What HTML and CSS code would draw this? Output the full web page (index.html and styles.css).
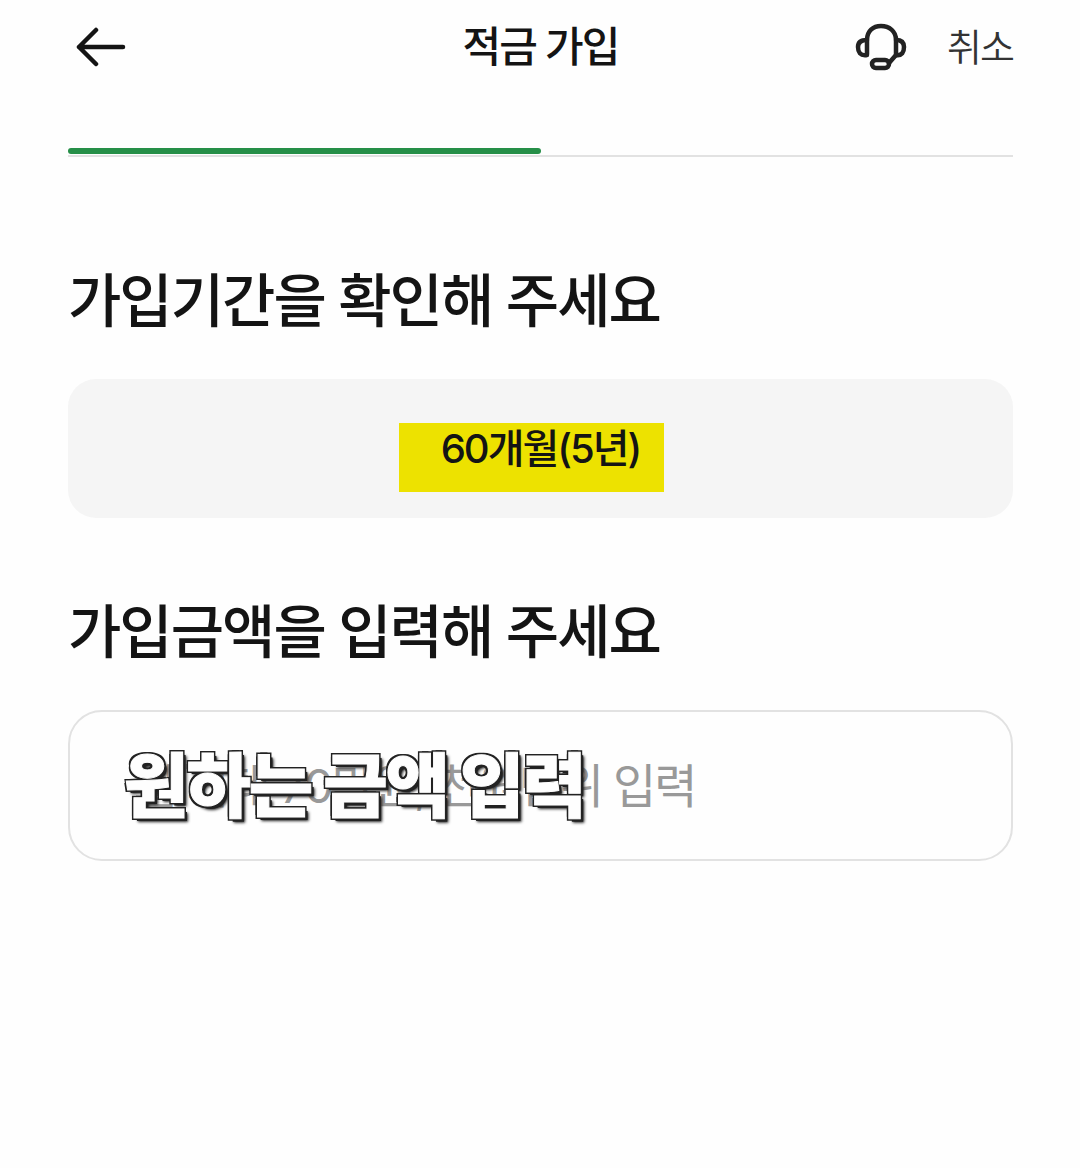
FILE: index.html
```html
<!DOCTYPE html>
<html lang="ko">
<head>
    <meta charset="UTF-8">
    <meta name="viewport" content="width=device-width, initial-scale=1.0">
    <title>적금 가입</title>
    <link rel="stylesheet" href="styles.css">
</head>
<body>
    <!-- Header -->
    <header class="topbar">
        <button class="icon-btn back" type="button" aria-label="뒤로">
            <svg width="52" height="42" viewBox="0 0 52 42" fill="none" stroke="#141414" stroke-width="4.5" stroke-linecap="round" stroke-linejoin="round">
                <path d="M20 4 L3 21 L20 38 M3 21 H47"/>
            </svg>
        </button>
        <h1 class="title">적금 가입</h1>
        <div class="actions">
            <button class="icon-btn" type="button" aria-label="상담">
                <svg width="52" height="50" viewBox="0 0 52 50" fill="none" stroke="#222" stroke-width="4.5" stroke-linecap="round" stroke-linejoin="round">
                    <path d="M12 32 V18 C12 9 18 4 26 4 C34 4 41 9 41 18 V33 L34 41"/>
                    <path d="M12 18 C5 18 3 21 3 25 C3 30 5 34 12 33"/>
                    <path d="M41 18 C47 18 49 21 49 25 C49 30 47 34 41 33"/>
                    <rect x="17" y="38" width="17" height="8" rx="4"/>
                </svg>
            </button>
            <button class="cancel" type="button">취소</button>
        </div>
    </header>

    <!-- Progress -->
    <div class="progress"><div class="progress-bar"></div></div>

    <main class="content">
        <section>
            <h2>가입기간을 확인해 주세요</h2>
            <div class="period"><mark>60개월(5년)</mark></div>
        </section>

        <section>
            <h2><label for="amount">가입금액을 입력해 주세요</label></h2>
            <div class="amount-box">
                <input type="text" id="amount" inputmode="numeric" placeholder="월 최대 70만원, 천원단위 입력">
                <span class="caption">원하는 금액 입력</span>
            </div>
        </section>
    </main>
</body>
</html>
```

FILE: styles.css
```css
* {
    box-sizing: border-box;
}

body {
    margin: 0;
    padding: 0 67px 0 68px;
    background: #fefefe;
    color: #141414;
    font-family: Inter, "Noto Sans CJK KR", sans-serif;
    letter-spacing: -2px;
}

button {
    padding: 0;
    border: none;
    background: none;
    color: inherit;
    font: inherit;
    letter-spacing: inherit;
    cursor: pointer;
}

/* Header */
.topbar {
    display: grid;
    grid-template-columns: 1fr auto 1fr;
    align-items: center;
    height: 94px;
}

.icon-btn {
    display: flex;
}

.back {
    padding-left: 8px;
}

.title {
    margin: 0;
    font-size: 42px;
    font-weight: 500;
    line-height: 60px;
}

.actions {
    display: flex;
    justify-content: flex-end;
    align-items: center;
    gap: 40px;
}

.cancel {
    color: #333;
    font-size: 38px;
    font-weight: 350;
    line-height: 60px;
}

/* Progress */
.progress {
    margin-top: 54px;
    height: 9px;
    border-bottom: 2px solid #e2e2e2;
}

.progress-bar {
    width: 50%;
    height: 6px;
    border-radius: 3px;
    background: #268f48;
}

/* Main Content */
.content {
    display: flex;
    flex-direction: column;
    gap: 74px;
    padding-top: 104px;
}

h2 {
    margin: 0 0 38px;
    font-size: 58px;
    font-weight: 500;
    line-height: 80px;
}

.period {
    display: flex;
    justify-content: center;
    padding: 44px 0 26px;
    border-radius: 28px;
    background: #f5f5f5;
}

mark {
    height: 69px;
    margin-right: 18px;
    padding: 0 24px 0 42px;
    background: #ede200;
    color: #141414;
    font-size: 40px;
    font-weight: 500;
    line-height: 52px;
}

.amount-box {
    position: relative;
}

input {
    display: block;
    width: 100%;
    height: 151px;
    padding: 0 64px;
    border: 2px solid #e2e2e2;
    border-radius: 34px;
    background: #fefefe;
    color: #141414;
    font: inherit;
    font-size: 47px;
    letter-spacing: inherit;
}

input::placeholder {
    color: #999;
    opacity: 1;
}

/* Caption laid over the amount field */
.caption {
    position: absolute;
    top: 32px;
    left: 56px;
    color: #fefefe;
    font-size: 70px;
    font-weight: 900;
    line-height: 90px;
    -webkit-text-stroke: 1px #fefefe;
    text-shadow: -2px -2px 0 #222, 2px -2px 0 #222, -2px 2px 0 #222, 3px 3px 0 #222, 4px 4px 3px #222;
    pointer-events: none;
    white-space: nowrap;
}
```
